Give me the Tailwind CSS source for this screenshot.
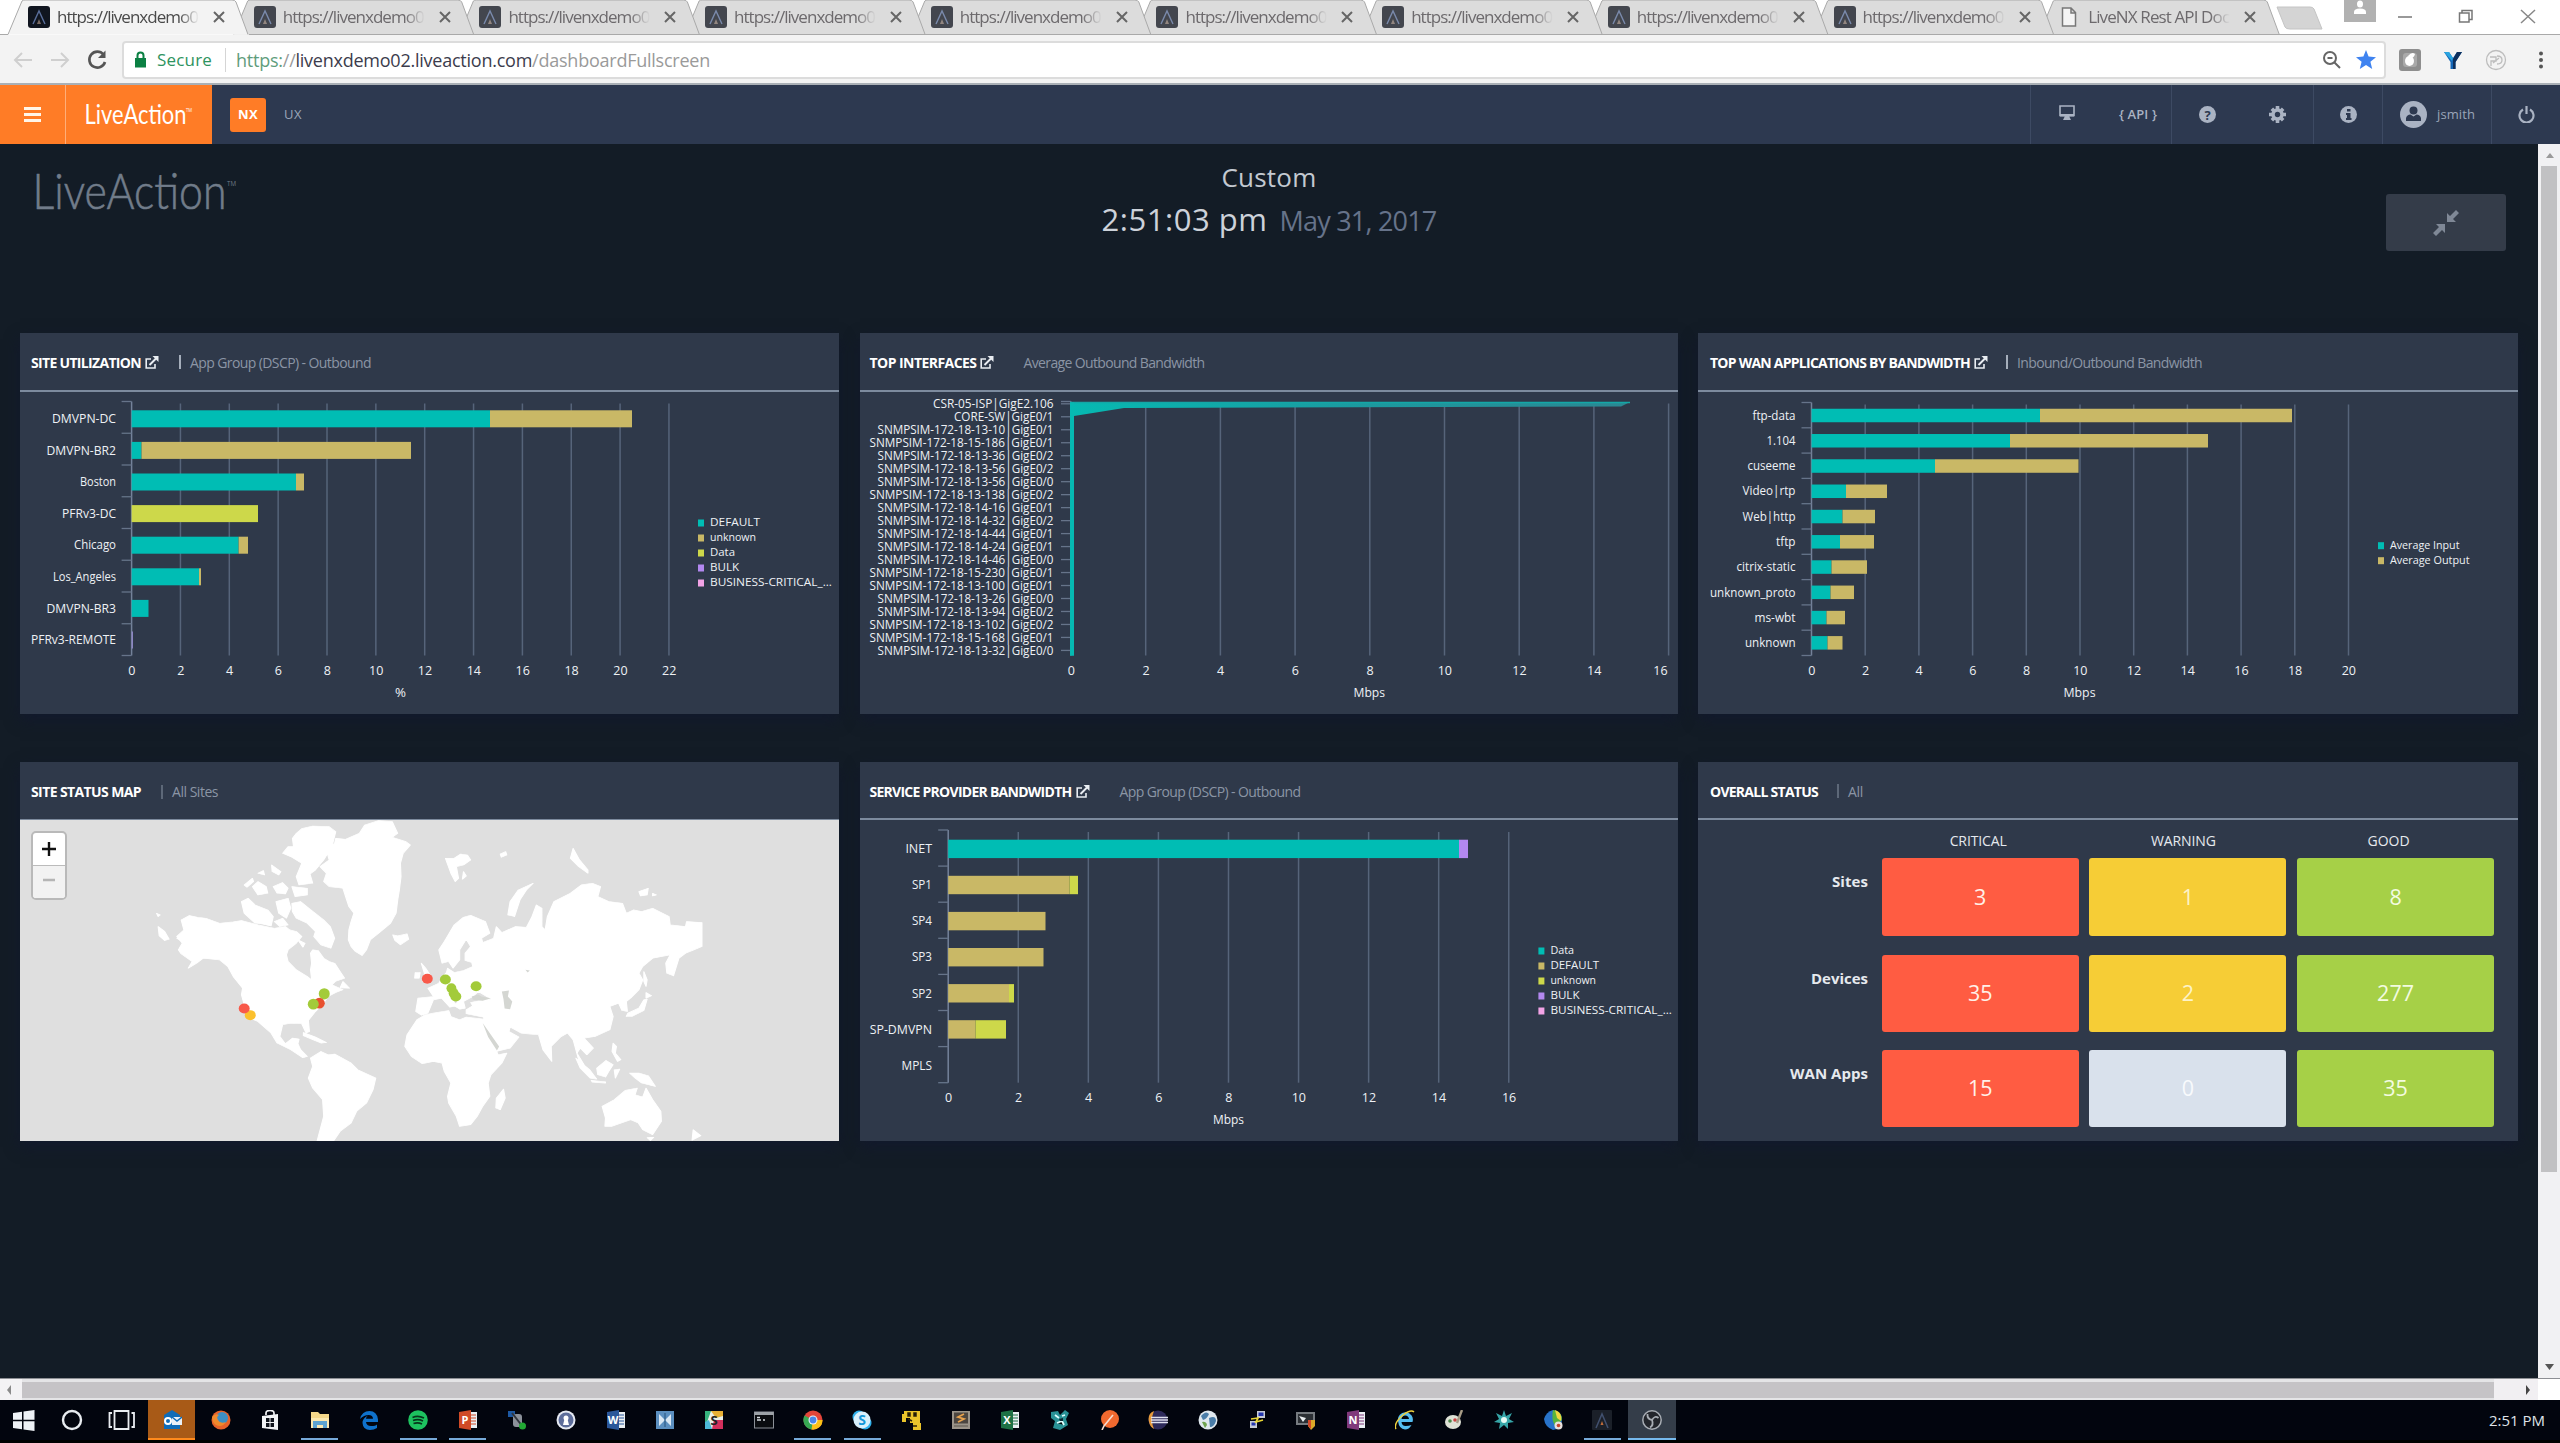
<!DOCTYPE html>
<html lang="en">
<head>
<meta charset="utf-8">
<title>LiveNX Dashboard</title>
<script src="https://cdn.jsdelivr.net/npm/@tailwindcss/browser@4"></script>
</head>
<body class="w-[2560px] h-[1443px] overflow-hidden bg-[#131c26] font-['Open_Sans','Noto_Sans',sans-serif]">
<div class="flex flex-col w-full h-full">

  <!-- tab strip -->
  <div class="relative h-[35px] shrink-0 bg-white flex items-stretch">
    <svg id="tabshapes" class="absolute inset-0" width="2560" height="35"></svg>
    <div id="tabs" class="relative flex pl-[13px] w-[2276px]"></div>
    <div class="relative flex-1 flex">
      <div class="ml-[68px] w-[32px] h-[22px] bg-[#b1b1b1] flex justify-center">
        <svg width="14" height="14" viewBox="0 0 14 14" fill="#fff"><ellipse cx="7" cy="4" rx="3" ry="3.5"/><path d="M1 14V12Q1 8.500 7 8.500T13 12V14Z"/></svg>
      </div>
      <svg class="ml-[22px]" width="14" height="35"><path d="M0 17H14" stroke="#777" stroke-width="1.500"/></svg>
      <svg class="ml-[46px]" width="16" height="35" fill="none" stroke="#777" stroke-width="1.500"><path d="M1.500 13H11V22H1.500ZM4 13V10.500H14V19.500H11"/></svg>
      <svg class="ml-[46px]" width="16" height="35" stroke="#888" stroke-width="1.500"><path d="M1 10L15 23M15 10L1 23"/></svg>
    </div>
  </div>

  <!-- address bar -->
  <div class="h-[50px] shrink-0 bg-[#f3f3f3] border-b-2 border-[#aab0b6] flex items-center pt-px">
    <svg class="ml-[13px]" width="20" height="16" fill="none" stroke="#cfcfcf" stroke-width="2"><path d="M19 8H2M9 1L2 8L9 15"/></svg>
    <svg class="ml-[17px]" width="20" height="16" fill="none" stroke="#cfcfcf" stroke-width="2"><path d="M1 8H18M11 1L18 8L11 15"/></svg>
    <svg class="ml-[17px]" width="21" height="20" fill="none" stroke="#555" stroke-width="2.600"><path d="M16.500 4.500A8 8 0 1 0 18 12"/><path d="M18.500 0.500V8H11Z" fill="#555" stroke="none"/></svg>
    <div class="ml-[14px] w-[2264px] h-[38px] bg-white border-2 border-[#dcdcdc] rounded-[4px] flex items-center text-[18px]">
      <svg class="ml-[10px]" width="13" height="17" fill="#0b8043"><path d="M1 7H12V16.500H1Z"/><path d="M3.500 8V4.500A3 3 0 0 1 9.500 4.500V8" fill="none" stroke="#0b8043" stroke-width="2"/></svg>
      <span class="ml-[10px] text-[#2e9360] text-[17px] leading-none" data-w="55">Secure</span>
      <span class="ml-[13px] w-px h-[24px] bg-[#d5d5d5]"></span>
      <span class="ml-[10px] leading-none whitespace-pre text-[#9a9a9a]" data-w="474"><span class="text-[#5f9d7c]">https:</span>//<span class="text-[#3c3c4c]">livenxdemo02.liveaction.com</span>/dashboardFullscreen</span>
      <span class="flex-1"></span>
      <svg class="mr-[14px]" width="20" height="20" fill="none" stroke="#666" stroke-width="2"><circle cx="8" cy="8" r="6"/><path d="M12.500 12.500L18 18M5.500 8H10.500"/></svg>
      <svg class="mr-[8px]" width="20" height="19" viewBox="0 0 20 19" fill="#3f83f0"><path d="M10 0L12.600 6.600L20 7.200L14.400 11.700L16.200 19L10 15L3.800 19L5.600 11.700L0 7.200L7.400 6.600Z"/></svg>
    </div>
    <svg class="ml-[13px]" width="22" height="22"><rect width="22" height="22" rx="3" fill="#8e8e8e"/><rect x="4" y="4" width="14" height="14" rx="3" fill="#a9a9a9"/><ellipse cx="10.500" cy="12" rx="4.500" ry="5" fill="#fff"/><path d="M9 7Q13 2 16 5Q15 9 12 9Z" fill="#fff"/></svg>
    <svg class="ml-[23px]" width="18" height="18"><path d="M0 1H5L9 7L13 1H18L11.500 11V18H6.500V11Z" fill="#1467b8"/><path d="M13 1H18L11.500 11V18H9V8Z" fill="#0d2f5c"/><path d="M0 1H5L9 7L8 10Z" fill="#29a5e0"/></svg>
    <svg class="ml-[23px]" width="22" height="22" fill="none" stroke="#bdbdbd" stroke-width="1.300"><circle cx="11" cy="11" r="9.500"/><path d="M5 8H11V12H6V17M12 7Q17 7 17 11T12 15M8 14L14 9"/></svg>
    <svg class="ml-[31px]" width="6" height="18" fill="#555"><circle cx="3" cy="2.500" r="2"/><circle cx="3" cy="9" r="2"/><circle cx="3" cy="15.500" r="2"/></svg>
  </div>

  <!-- application bar -->
  <header class="h-[59px] shrink-0 bg-[#2d3950] flex items-stretch text-[#aab3c3]">
    <div class="w-[65px] bg-[#ff7c26] flex items-center justify-center"><svg width="17" height="15" fill="#fff5e8"><path d="M0 0H17V3H0ZM0 6H17V9H0ZM0 12H17V15H0Z"/></svg></div>
    <div class="w-[147px] bg-[#ff7c26] border-l border-[#ffae78]">
      <svg width="146" height="59"><text x="18.500" y="39" textLength="102" lengthAdjust="spacingAndGlyphs" fill="#fff" class="text-[26px] font-[Lato] font-normal">LiveAction</text><text x="120" y="27" textLength="6" lengthAdjust="spacingAndGlyphs" fill="#fff" class="text-[5px]">TM</text></svg>
    </div>
    <div class="flex items-center">
      <div class="ml-[18px] w-[36px] h-[34px] rounded-[3px] bg-[#ff7c26] flex items-center justify-center text-white font-bold text-[13px]"><span data-w="20">NX</span></div>
      <span class="ml-[18px] text-[13px] text-[#9aa5b8]" data-w="18">UX</span>
    </div>
    <div class="flex-1"></div>
    <div class="w-[141px] border-l border-[#3d4a63] flex items-center">
      <svg class="ml-[28px] mb-1" width="16" height="16"><path d="M1 1H15V10.500H1Z" fill="none" stroke="#aab3c3" stroke-width="1.600"/><path d="M1 9H15V11.500H1ZM6 11H10L12 15H4Z" fill="#aab3c3"/></svg>
      <span class="ml-[44px] text-[13px] font-semibold" data-w="38">{ API }</span>
    </div>
    <div class="w-[142px] border-l border-[#3d4a63] flex items-center">
      <svg class="ml-[27px]" width="17" height="17"><circle cx="8.500" cy="8.500" r="8.500" fill="#aab3c3"/><text x="8.500" y="13.500" text-anchor="middle" fill="#2d3950" class="text-[13px] font-bold">?</text></svg>
      <svg class="ml-[53px]" width="17" height="17" viewBox="-8.500 -8.500 17 17"><g fill="#aab3c3"><path d="M-1.800 -8.500H1.800V8.500H-1.800ZM-8.500 -1.800V1.800H8.500V-1.800Z"/><path d="M-1.800 -8H1.800V8H-1.800ZM-8 -1.800V1.800H8V-1.800Z" transform="rotate(45)"/><circle r="6.200"/></g><circle r="2.700" fill="#2d3950"/></svg>
    </div>
    <div class="w-[69px] border-l border-[#3d4a63] flex items-center justify-center">
      <svg width="17" height="17"><circle cx="8.500" cy="8.500" r="8.500" fill="#aab3c3"/><path d="M7 3H10.500V5.500H7ZM6 7H10.500V12H11.500V14H6V12H7V9H6Z" fill="#2d3950"/></svg>
    </div>
    <div class="w-[109px] border-l border-[#3d4a63] flex items-center">
      <svg class="ml-[17px]" width="27" height="27"><circle cx="13.500" cy="13.500" r="13.500" fill="#aab3c3"/><circle cx="13.500" cy="9.500" r="4" fill="#2d3950"/><path d="M6 20V17Q7 13.500 10.500 13.500L13.500 15.500L16.500 13.500Q20 13.500 21 17V20Z" fill="#2d3950"/></svg>
      <span class="ml-[10px] text-[13px] text-[#9aa5b8]" data-w="38">jsmith</span>
    </div>
    <div class="w-[69px] border-l border-[#3d4a63] flex items-center justify-center">
      <svg width="17" height="17" fill="none" stroke="#aab3c3" stroke-width="2.200"><path d="M5 3.500A7 7 0 1 0 12 3.500M8.500 0V8"/></svg>
    </div>
  </header>

  <!-- page -->
  <div class="flex flex-1 min-h-0">
    <main class="w-[2538px] shrink-0">
      <div class="h-[189px] flex items-start justify-between">
        <svg class="w-[300px]" width="300" height="100"><text x="32.500" y="64.500" textLength="194" lengthAdjust="spacingAndGlyphs" fill="#717c8a" stroke="#717c8a" stroke-width=".6" class="text-[49px] font-[Lato] font-light">LiveAction</text><text x="227" y="42" textLength="9" lengthAdjust="spacingAndGlyphs" fill="#717c8a" class="text-[8px]">TM</text></svg>
        <div class="flex flex-col items-center">
          <span class="mt-[15px] text-[26px] leading-[36px] text-[#c3c9d1]" data-w="95">Custom</span>
          <div class="mt-[2px] flex items-baseline leading-[44px]">
            <span class="text-[31px] text-[#cdd2da]" data-w="166">2:51:03 pm</span>
            <span class="ml-[12px] text-[27px] text-[#66738a]" data-w="157">May 31, 2017</span>
          </div>
        </div>
        <div class="w-[300px] flex justify-end pr-[32px] pt-[50px]">
          <button class="w-[120px] h-[57px] rounded-[3px] bg-[#343c49] flex items-center justify-center">
            <svg width="26" height="26" fill="#7f8896"><path d="M14 3V12H23L20 9L26 3L23 0L17 6Z"/><path d="M12 23V14H3L6 17L0 23L3 26L9 20Z"/></svg>
          </button>
        </div>
      </div>
      <div class="grid grid-cols-[819px_818px_820px] grid-rows-[381px_379px] gap-x-[20.500px] gap-y-[48px] pl-[20px]" id="cards">

        <section class="bg-[#2f394a] shadow-[0_6px_14px_rgba(18,24,45,0.9)] flex flex-col">
          <div class="h-[58.500px] shrink-0 border-b-2 border-[#7d8b9e] flex items-center pl-[11px] pt-[2px] text-[14px] text-[#8b95a5]">
            <b class="text-white" data-w="110">SITE UTILIZATION</b>
            <svg class="ml-[4px]" width="14" height="13"><use href="#ext"/></svg>
            <i class="ml-[20px] w-[2px] h-[14px] bg-[#a5aebb]"></i><span class="ml-[9px]" data-w="181">App Group (DSCP) - Outbound</span>
          </div>
          <svg class="flex-1" viewBox="20 391.500 819 322.500" id="c1"></svg>
        </section>

        <section class="bg-[#2f394a] shadow-[0_6px_14px_rgba(18,24,45,0.9)] flex flex-col">
          <div class="h-[58.500px] shrink-0 border-b-2 border-[#7d8b9e] flex items-center pl-[10px] pt-[2px] text-[14px] text-[#8b95a5]">
            <b class="text-white" data-w="107">TOP INTERFACES</b>
            <svg class="ml-[3px]" width="14" height="13"><use href="#ext"/></svg>
            <span class="ml-[30px]" data-w="181">Average Outbound Bandwidth</span>
          </div>
          <svg class="flex-1" viewBox="860 391.500 818 322.500" id="c2"></svg>
        </section>

        <section class="bg-[#2f394a] shadow-[0_6px_14px_rgba(18,24,45,0.9)] flex flex-col">
          <div class="h-[58.500px] shrink-0 border-b-2 border-[#7d8b9e] flex items-center pl-[12px] pt-[2px] text-[14px] text-[#8b95a5]">
            <b class="text-white" data-w="260">TOP WAN APPLICATIONS BY BANDWIDTH</b>
            <svg class="ml-[4px]" width="14" height="13"><use href="#ext"/></svg>
            <i class="ml-[18px] w-[2px] h-[14px] bg-[#a5aebb]"></i><span class="ml-[9px]" data-w="185">Inbound/Outbound Bandwidth</span>
          </div>
          <svg class="flex-1" viewBox="1698 391.500 820 322.500" id="c3"></svg>
        </section>

        <section class="bg-[#2f394a] shadow-[0_6px_14px_rgba(18,24,45,0.9)] flex flex-col">
          <div class="h-[58px] shrink-0 border-b border-[#7d8b9e] flex items-center pl-[11px] pt-[2px] text-[14px] text-[#8b95a5]">
            <b class="text-white" data-w="110">SITE STATUS MAP</b>
            <i class="ml-[20px] w-[2px] h-[14px] bg-[#5d6878]"></i><span class="ml-[9px]" data-w="46">All Sites</span>
          </div>
          <div class="relative flex-1 min-h-0 bg-[#dfdfdf]">
            <svg class="absolute inset-0 w-full h-full" viewBox="36 210 1494 964" preserveAspectRatio="none">
              <g fill="#fff" stroke="#fff" stroke-width="2" stroke-linejoin="round">
                <path d="M330 510L345 497 360 502 375 505 400 520 425 516 440 512 470 525 500 535 520 530 528 540 540 545 550 560 540 580 525 600 522 615 525 635 540 660 560 680 568 690 566 660 568 640 566 610 570 600 580 602 590 625 600 635 610 640 620 665 628 685 612 694 605 705 615 712 625 720 612 728 598 740 590 760 575 785 562 812 564 845 558 850 550 822 530 820 515 825 510 860 520 882 533 865 545 868 543 882 548 900 560 920 552 924 530 900 505 880 494 850 470 815 460 808 445 765 440 735 442 715 425 680 415 650 400 630 370 625 358 640 343 655 350 635 330 612 325 600 332 580 322 560 335 540Z"/>
                <path d="M566 925L585 905 598 915 610 913 640 940 652 960 685 985 680 1020 668 1060 650 1085 640 1120 620 1145 608 1174 578 1174 590 1100 588 1050 570 1015 562 985 570 950Z"/>
                <path d="M655 250L665 225 690 212 715 215 725 250 715 262 740 275 748 285 735 310 730 340 731 380 728 420 725 450 722 490 712 520 690 550 675 570 668 600 660 617 648 605 640 590 635 570 636 540 640 515 645 490 636 470 630 440 625 415 600 410 590 395 595 370 583 350 600 330 595 300 610 280 612 265 630 268Z"/>
                <path d="M540 250L550 236 570 228 600 230 612 245 605 290 590 330 575 360 565 372 570 400 545 405 540 380 550 340 530 320 515 310 525 290 535 290 533 265Z"/>
                <path d="M440 455L452 445 465 465 488 480 498 500 494 528 478 522 465 520 445 490ZM460 410L470 395 485 410 488 430 470 435ZM445 405L460 385 462 395 450 412ZM495 345L512 365 508 375 496 365ZM498 410L515 398 525 415 520 432 505 430ZM503 455L525 445 530 475 522 505 508 490ZM532 410L560 415 560 435 538 440ZM532 460L548 455 565 478 590 510 602 530 610 565 603 595 585 585 572 560 575 545 560 520 540 505 533 485ZM543 570L556 580 552 592ZM470 370L480 362 482 375ZM500 515L515 505 525 525 510 530ZM288 530L300 545 308 568 300 572 290 558ZM285 490L292 495 288 500ZM322 565L330 560 332 575Z"/>
                <path d="M716 555L725 558 742 552 745 568 730 585 720 572ZM812 325L828 325 840 312 852 315 858 330 845 345 832 350 836 385 830 395 822 370ZM845 365L850 378 843 388ZM912 312L922 305 924 315 914 322ZM972 400L960 420 948 450 938 500 926 495 930 455 945 420ZM1045 295L1056 328 1072 360 1072 370 1055 350 1040 325ZM1165 425L1182 415 1180 435 1168 438ZM1190 430L1197 435 1190 438Z"/>
                <path d="M800 600L810 575 828 525 845 502 858 496 885 515 893 550 878 565 880 578 900 565 905 530 915 548 940 530 960 532 970 500 978 465 988 475 988 530 994 540 998 500 1010 455 1040 430 1060 405 1080 400 1095 410 1090 440 1110 455 1135 460 1142 490 1155 480 1170 485 1190 475 1220 500 1222 525 1250 530 1252 515 1280 518 1280 590 1265 600 1250 610 1238 625 1228 678 1216 670 1214 640 1222 615 1190 625 1172 650 1165 670 1172 690 1165 720 1150 745 1142 755 1144 785 1134 782 1128 760 1112 770 1118 800 1112 840 1085 860 1065 865 1082 895 1070 915 1058 895 1052 910 1065 945 1055 930 1045 870 1035 850 1022 862 1005 890 1006 935 990 900 982 855 968 853 950 850 930 832 928 845 946 862 930 895 905 905 893 870 882 830 882 802 850 792 850 780 862 768 858 758 875 752 895 748 885 738 872 725 862 740 845 755 848 775 838 778 828 768 835 755 818 735 828 758 832 768 820 772 805 745 790 750 780 790 768 796 758 785 762 745 790 740 780 715 800 700 808 680 814 668 816 655 828 668 845 662 862 650 860 638 848 632 848 610 858 590 850 568 838 600 838 630 826 655 818 635 806 640Z"/>
                <path d="M760 810L775 795 790 790 818 782 822 800 838 810 850 802 882 808 886 840 900 880 908 915 924 910 915 940 895 975 890 1000 893 1040 880 1070 870 1100 858 1125 838 1130 832 1100 818 1060 816 1040 822 1000 810 965 806 940 790 935 770 942 750 920 738 890 742 855Z"/>
                <path d="M918 1018L921 1045 912 1080 904 1075 905 1045ZM768 640L776 655 784 675 788 690 770 694 774 672ZM757 668L766 668 764 685 756 685ZM1174 665L1180 690 1178 710 1174 695ZM1178 728L1188 738 1178 745ZM1180 748L1174 782 1152 800 1142 800 1145 790 1165 775 1174 750ZM1050 925L1075 960 1088 988 1076 985 1058 955ZM1078 992L1104 996 1104 1000 1080 997ZM1088 955L1105 932 1118 945 1110 965 1104 982 1090 975ZM1118 880L1124 890 1122 910 1132 930 1126 935 1116 905ZM1148 970L1165 970 1182 978 1195 1010 1170 1000 1158 985ZM1120 960L1130 958 1122 985ZM1098 1070L1120 1050 1140 1022 1162 1015 1158 1035 1172 1042 1178 1015 1190 1050 1205 1085 1206 1115 1190 1155 1172 1140 1164 1120 1150 1110 1115 1130 1103 1130 1104 1105ZM1180 1164L1192 1163 1186 1173ZM1264 1140L1278 1158 1262 1172ZM625 695L637 715 620 714ZM553 848L575 862 595 878 585 880 568 868 553 858Z"/>
              </g>
              <g fill="#d4d6d2"><path d="M860 740L872 734 878 740 895 745 880 753 862 750ZM915 725L928 722 926 740 934 755 930 778 920 776 918 748ZM880 820L910 890 906 902 890 862ZM958 660L966 662 962 668Z"/></g>
              <g fill="#a3cb3a"><ellipse cx="591" cy="732" rx="10" ry="17"/></g>
              <ellipse cx="582" cy="760" rx="10" ry="16" fill="#e8502f"/>
              <g fill="#a3cb3a"><ellipse cx="571" cy="763" rx="10" ry="16"/><ellipse cx="812" cy="689" rx="10" ry="15"/><ellipse cx="823" cy="715" rx="9" ry="15"/><ellipse cx="827" cy="730" rx="9" ry="15"/><ellipse cx="831" cy="740" rx="10" ry="15"/><ellipse cx="868" cy="709" rx="10" ry="15"/></g>
              <ellipse cx="456" cy="796" rx="10" ry="15" fill="#fbc02d"/>
              <g fill="#f8594a"><ellipse cx="445" cy="776" rx="10" ry="15"/><ellipse cx="779" cy="687" rx="10" ry="15"/></g>
            </svg>
            <div class="absolute left-[11px] top-[11px] w-[36px] h-[69px] rounded-[5px] border-2 border-[#b9b9b9] bg-white flex flex-col overflow-hidden">
              <div class="flex-1 border-b border-[#bbb] flex items-center justify-center"><svg width="14" height="14" stroke="#111" stroke-width="2.400"><path d="M7 0V14M0 7H14"/></svg></div>
              <div class="flex-1 bg-[#f2f2f2] flex items-center justify-center"><svg width="12" height="14" stroke="#b5b5b5" stroke-width="2.400"><path d="M0 5H12"/></svg></div>
            </div>
          </div>
        </section>

        <section class="bg-[#2f394a] shadow-[0_6px_14px_rgba(18,24,45,0.9)] flex flex-col">
          <div class="h-[58px] shrink-0 border-b-2 border-[#7d8b9e] flex items-center pl-[10px] pt-[2px] text-[14px] text-[#8b95a5]">
            <b class="text-white" data-w="202">SERVICE PROVIDER BANDWIDTH</b>
            <svg class="ml-[4px]" width="14" height="13"><use href="#ext"/></svg>
            <span class="ml-[30px]" data-w="181">App Group (DSCP) - Outbound</span>
          </div>
          <svg class="flex-1" viewBox="860 820 818 321" id="c5"></svg>
        </section>

        <section class="bg-[#2f394a] shadow-[0_6px_14px_rgba(18,24,45,0.9)] flex flex-col">
          <div class="h-[58px] shrink-0 border-b-2 border-[#7d8b9e] flex items-center pl-[12px] pt-[2px] text-[14px] text-[#8b95a5]">
            <b class="text-white" data-w="108">OVERALL STATUS</b>
            <i class="ml-[19px] w-[2px] h-[14px] bg-[#5d6878]"></i><span class="ml-[9px]" data-w="15">All</span>
          </div>
          <div id="status" class="grid grid-cols-[173px_197px_197px_197px] grid-rows-[20px_78px_77px_77px] gap-x-[10.700px] gap-y-[18.500px] pt-[11px] [&>*:nth-child(n+5)]:-mt-[11.500px] [&>*:nth-child(n+5)]:mb-[11.500px] text-[#e6e9ee]">
            <span></span>
            <span class="text-center text-[14px] leading-[20px] pr-[4px]"><span data-w="57">CRITICAL</span></span>
            <span class="text-center text-[14px] leading-[20px] pr-[9px]"><span data-w="65">WARNING</span></span>
            <span class="text-center text-[14px] leading-[20px] pr-[14px]"><span data-w="42">GOOD</span></span>
            <b class="text-right text-[15px] leading-[20px] pt-[13px] pr-[3px]"><span data-w="36">Sites</span></b>
            <div class="bg-[#ff5c42] rounded-[3px] flex items-center justify-center text-[21.500px] text-[#fff0e8]">3</div>
            <div class="bg-[#f6cd36] rounded-[3px] flex items-center justify-center text-[21.500px] text-[#fdf3c8]">1</div>
            <div class="bg-[#a6d047] rounded-[3px] flex items-center justify-center text-[21.500px] text-[#f3fbe0]">8</div>
            <b class="text-right text-[15px] leading-[20px] pt-[13px] pr-[3px]"><span data-w="57">Devices</span></b>
            <div class="bg-[#ff5c42] rounded-[3px] flex items-center justify-center text-[21.500px] text-[#fff0e8]">35</div>
            <div class="bg-[#f6cd36] rounded-[3px] flex items-center justify-center text-[21.500px] text-[#fdf3c8]">2</div>
            <div class="bg-[#a6d047] rounded-[3px] flex items-center justify-center text-[21.500px] text-[#f3fbe0]">277</div>
            <b class="text-right text-[15px] leading-[20px] pt-[13px] pr-[3px]"><span data-w="78">WAN Apps</span></b>
            <div class="bg-[#ff5c42] rounded-[3px] flex items-center justify-center text-[21.500px] text-[#fff0e8]">15</div>
            <div class="bg-[#d9e1ec] rounded-[3px] flex items-center justify-center text-[21.500px] text-[#f8fafc]">0</div>
            <div class="bg-[#a6d047] rounded-[3px] flex items-center justify-center text-[21.500px] text-[#f3fbe0]">35</div>
          </div>
        </section>
      </div>
    </main>
    <!-- vertical scrollbar -->
    <div class="w-[22px] bg-[#f1f1f3] flex flex-col items-center">
      <svg width="22" height="22"><path d="M8 14L12 9L16 14Z" fill="#9a9a9a"/></svg>
      <div class="w-[16px] h-[1006px] bg-[#c1c1c3]"></div>
      <div class="flex-1"></div>
      <svg width="22" height="22"><path d="M7 8H16L11.500 14Z" fill="#555"/></svg>
    </div>
  </div>

  <!-- horizontal scrollbar -->
  <div class="h-[22px] shrink-0 bg-[#e4e4e6] border-t border-[#8d8f94] flex items-center">
    <svg class="bg-[#f3f2f4]" width="22" height="21"><path d="M11 6L7 11L11 16Z" fill="#8a8a8a"/></svg>
    <div class="w-[2472px] h-[16px] bg-[#c5c3c6]"></div>
    <svg class="bg-[#f1eff2]" width="44" height="21"><path d="M32 6L36 11L32 16Z" fill="#444"/></svg>
    <div class="flex-1 h-full bg-white"></div>
  </div>

  <!-- taskbar -->
  <div class="h-[43px] shrink-0 bg-[#02050e] flex items-stretch border-b-[3px] border-black">
    <div class="w-[48px] flex items-center justify-center"><svg width="22" height="21" fill="#eef2f6"><path d="M0 3L9 1.700V9.800H0ZM10.500 1.500L21.500 0V9.800H10.500ZM0 11.200H9V19.300L0 18ZM10.500 11.200H21.500V21L10.500 19.500Z"/></svg></div>
    <div class="w-[48px] flex items-center justify-center"><svg width="22" height="22"><circle cx="11" cy="11" r="9" fill="none" stroke="#e8ecf0" stroke-width="2.400"/></svg></div>
    <div class="w-[51px] flex items-center justify-center"><svg width="28" height="20" fill="none" stroke="#e8ecf0" stroke-width="1.800"><path d="M6.500 1H20.500V19H6.500ZM4 3H1.500V17H4M23.500 3H26V17H23.500"/></svg></div>
    <div id="task" class="flex"></div>
    <div class="flex-1"></div>
    <div class="w-[71px] flex items-center text-[15px] text-[#dfe3e8]"><span data-w="56">2:51 PM</span></div>
  </div>
</div>

<svg width="0" height="0" class="absolute"><defs><g id="ext"><path d="M6 3H1.200V12H10V8" fill="none" stroke="#e9edf2" stroke-width="1.600"/><path d="M4.500 9L11 2.500" stroke="#e9edf2" stroke-width="2"/><path d="M7.500 0H13.500V6Z" fill="#e9edf2"/></g></defs></svg>

<script>
/* ---- browser tabs ---- */
const P = 225.7;
let shapes = '', tabs = '';
for (let i = 9; i >= 0; i--) {
  const x = 8 + i * P;
  shapes += `<path d="M${x} 34.500L${x + 14} 1Q${x + 15} 0 ${x + 17} 0H${x + 224}Q${x + 227} 0 ${x + 228} 2L${x + 240} 34.500" fill="${i ? '#dcdcdc' : '#f3f3f3'}" stroke="#a9a9a9"/>`;
}
shapes += '<path d="M249 34.500H2560M0 34.500H8" stroke="#a9a9a9"/><path d="M2277 7H2310Q2313 7 2314 9L2322 29H2290Q2286 29 2285 27Z" fill="#d4d4d4" stroke="#c4c4c4"/>';
document.getElementById('tabshapes').innerHTML = shapes;
for (let i = 0; i < 10; i++) {
  const icon = i < 9
    ? `<svg class="ml-[15px] shrink-0" width="22" height="22" opacity="${i ? .75 : 1}"><rect width="22" height="22" rx="3" fill="#10151f"/><path d="M5 18L11 5L17 18" fill="none" stroke="#5a6f9c" stroke-width="1.400"/><path d="M9 18L11 13L13 18Z" fill="#7a6a62"/></svg>`
    : '<svg class="ml-[17px] mr-[4px] shrink-0" width="16" height="20" fill="#f4f4f4" stroke="#777" stroke-width="1.500"><path d="M1.500 1H10L14.500 5.500V19H1.500ZM10 1V6H14.500"/></svg>';
  tabs += `<div class="w-[225.700px] h-[34px] shrink-0 flex items-center">${icon}
    <span class="ml-[7px] w-[142px] overflow-hidden whitespace-nowrap text-[17px] leading-[30px] [mask-image:linear-gradient(90deg,#000_86%,transparent_100%)] ${i ? 'text-[#6d6a6d]' : 'text-[#4a4a4a]'}"><span data-w="${i < 9 ? 141 : 141}">${i < 9 ? 'https://livenxdemo0' : 'LiveNX Rest API Doc'}</span></span>
    <svg class="ml-[14px] shrink-0" width="12" height="12" stroke="#666" stroke-width="2"><path d="M1 1L11 11M11 1L1 11"/></svg></div>`;
}
document.getElementById('tabs').innerHTML = tabs;

/* ---- charts ---- */
const TEAL = '#00bdb4', TAN = '#c9b866', LIME = '#cdd84a', PURPLE = '#b388f0', PINK = '#f2a3e6';
const txt = (s, x0, x1, y, size = 13) => `<text x="${x0}" y="${y}" textLength="${x1 - x0}" lengthAdjust="spacingAndGlyphs" font-size="${size}" font-weight="500" fill="#eef1f5">${s}</text>`;
const rect = (x0, x1, y, h, c) => `<rect x="${x0}" y="${y}" width="${x1 - x0}" height="${h}" fill="${c}"/>`;
const vline = (x, a, b, c = '#56647a') => `<path d="M${x} ${a}V${b}" stroke="${c}" stroke-width="1.500"/>`;
function axis(o) {
  let s = '';
  for (let i = 0; i <= o.n; i++) {
    const x = o.x + o.step * i;
    s += vline(x, i ? o.top + 2 : o.top, o.bottom, i ? undefined : '#74829a');
    s += `<text x="${i === o.n && o.lastX ? o.lastX : x + .3}" y="${o.bottom + 19.5}" text-anchor="middle" font-size="12.500" font-weight="500" fill="#eef1f5">${i * 2}</text>`;
  }
  for (let i = 0; i <= o.rows; i++) s += `<path d="M${o.x - 10} ${o.top + (o.bottom - o.top) / o.rows * i}H${o.x}" stroke="#66748a" stroke-width="1.300"/>`;
  return s;
}
function bars(o) {
  return o.data.map((r, i) => {
    const cy = o.cy + o.pitch * i;
    let s = txt(r[0], r[1], o.end, cy + 4.2), x = o.x;
    for (let k = 2; k < r.length; k += 2) { s += rect(x, r[k], cy - o.h / 2, o.h, r[k + 1]); x = r[k]; }
    return s;
  }).join('');
}
const legend = (x, y, items) => items.map((t, i) => rect(x, x + 6, y + 15 * i - 3, 7, t[2]) + txt(t[0], x + 12, t[1], y + 15 * i + 3.3, 11.5)).join('');
const put = (id, s) => { document.getElementById(id).innerHTML = s; };

put('c1', axis({ x: 131.6, step: 48.85, n: 11, top: 401, bottom: 655, rows: 8 })
  + bars({ x: 131.6, end: 116, cy: 418.3, pitch: 31.6, h: 17, data: [
    ['DMVPN-DC', 52, 490, TEAL, 632, TAN], ['DMVPN-BR2', 46.5, 141.5, TEAL, 411, TAN], ['Boston', 80, 296, TEAL, 304, TAN],
    ['PFRv3-DC', 62, 258, LIME], ['Chicago', 74, 238.6, TEAL, 248, TAN], ['Los_Angeles', 53, 199, TEAL, 201, TAN],
    ['DMVPN-BR3', 46.5, 148.5, TEAL], ['PFRv3-REMOTE', 31, 133, '#8d86c4']] })
  + txt('%', 395, 406, 696) + legend(698, 522, [['DEFAULT', 760, TEAL], ['unknown', 756, TAN], ['Data', 735, LIME], ['BULK', 739, PURPLE], ['BUSINESS-CRITICAL_...', 832, PINK]]));

const ifs = ['CSR-05-ISP|GigE2.106', 'CORE-SW|GigE0/1', '13-10|GigE0/1', '15-186|GigE0/1', '13-36|GigE0/2', '13-56|GigE0/2', '13-56|GigE0/0', '13-138|GigE0/2', '14-16|GigE0/1', '14-32|GigE0/2', '14-44|GigE0/1', '14-24|GigE0/1', '14-46|GigE0/0', '15-230|GigE0/1', '13-100|GigE0/1', '13-26|GigE0/0', '13-94|GigE0/2', '13-102|GigE0/2', '15-168|GigE0/1', '13-32|GigE0/0'];
put('c2', axis({ x: 1071, step: 74.7, n: 8, top: 401, bottom: 655, rows: 0.5, lastX: 1660.5 })
  + ifs.map((t, i) => {
    const y = 403.3 + 12.98 * i;
    const x0 = i === 0 ? 933 : i === 1 ? 954 : /^\d\d-\d\d\d/.test(t) ? 869.5 : 877.5;
    return txt((i > 1 ? 'SNMPSIM-172-18-' : '') + t, x0, 1053.5, y + 4.2, 12.5) + `<path d="M1061 ${y}H1071" stroke="#66748a" stroke-width="1.300"/>`;
  }).join('')
  + '<defs><linearGradient id="ag"><stop offset="0" stop-color="#06b9b2"/><stop offset=".5" stop-color="#1b9ba0"/><stop offset="1" stop-color="#2b8792"/></linearGradient></defs>'
  + '<path d="M1070 401.500H1630L1621 406L1124 407.500L1096 412L1074 415.500V655H1070Z" fill="url(#ag)"/><path d="M1070 402H1630" stroke="#14a7a6" stroke-width="1.500"/><path d="M1072 402V655" stroke="#06b9b2" stroke-width="4"/>'
  + txt('Mbps', 1353.5, 1385, 696));

put('c3', axis({ x: 1811.5, step: 53.7, n: 10, top: 402, bottom: 655, rows: 10 })
  + bars({ x: 1811.5, end: 1795.5, cy: 415, pitch: 25.26, h: 13.5, data: [
    ['ftp-data', 1752.5, 2040, TEAL, 2292, TAN], ['1.104', 1766.5, 2010, TEAL, 2208, TAN], ['cuseeme', 1747.5, 1935, TEAL, 2078.5, TAN],
    ['Video|rtp', 1742.5, 1846, TEAL, 1887, TAN], ['Web|http', 1742.5, 1842.5, TEAL, 1875, TAN], ['tftp', 1776, 1840, TEAL, 1874, TAN],
    ['citrix-static', 1736.5, 1831.5, TEAL, 1867, TAN], ['unknown_proto', 1710, 1830.5, TEAL, 1854, TAN], ['ms-wbt', 1754.5, 1826.5, TEAL, 1845, TAN], ['unknown', 1745, 1827.5, TEAL, 1842.5, TAN]] })
  + txt('Mbps', 2063.5, 2095.5, 696) + legend(2378, 544.7, [['Average Input', 2459.5, TEAL], ['Average Output', 2469.5, TAN]]));

put('c5', axis({ x: 948.2, step: 70.07, n: 8, top: 830, bottom: 1082.7, rows: 7 })
  + bars({ x: 948.2, end: 932, cy: 848.9, pitch: 36.1, h: 18.4, data: [
    ['INET', 905.4, 1459, TEAL, 1468, PURPLE], ['SP1', 912, 1069.5, TAN, 1078, LIME], ['SP4', 912, 1045.5, TAN], ['SP3', 912, 1043.5, TAN],
    ['SP2', 912, 1009, TAN, 1014, LIME], ['SP-DMVPN', 869.7, 975.5, TAN, 1006, LIME], ['MPLS', 901.5]] })
  + txt('Mbps', 1213, 1244, 1124) + legend(1538.4, 950.5, [['Data', 1574, TEAL], ['DEFAULT', 1599, TAN], ['unknown', 1596, LIME], ['BULK', 1579.5, PURPLE], ['BUSINESS-CRITICAL_...', 1672, PINK]]));

/* ---- taskbar icons, 20x20 each ---- */
const L = (c, t, x = 10, f = '#fff', s = 11) => `<text x="${x}" y="14" text-anchor="middle" font-weight="700" font-size="${s}" fill="${f}">${t}</text>`;
const doc = (c, t) => `<path d="M10 2H19V18H10Z" fill="#e9eef2"/><path d="M12 5H18M12 8H18M12 11H18M12 14H18" stroke="${c}" stroke-width="1.200"/><path d="M1 2L13 0V20L1 18Z" fill="${c}"/>` + L(c, t, 7);
const icons = [
  '<path d="M2 5L10 0L18 5V19H2Z" fill="#0f6cb8"/><path d="M10 7H20V15H10Z" fill="#eaf1f8"/><path d="M10 7L15 11L20 7" fill="none" stroke="#0f6cb8" stroke-width="1.500"/><circle cx="6" cy="11" r="3" fill="none" stroke="#fff" stroke-width="2"/>',
  '<circle cx="10" cy="10" r="9.500" fill="#e8622a"/><circle cx="11" cy="8" r="6" fill="#3c8fc4"/><path d="M1 7Q4 3 8 5Q5 7 7 10Q9 14 15 12Q11 18 5 15Q1 12 1 7Z" fill="#f08a2c"/>',
  '<path d="M2 6L18 4V20L2 18Z" fill="#f2f4f6"/><path d="M6 5V3Q6 .500 10 .500T14 3V5" fill="none" stroke="#f2f4f6" stroke-width="1.700"/><path d="M6 8H9.500V12H6ZM10.500 8H14V12H10.500ZM6 13H9.500V17H6ZM10.500 13H14V17H10.500Z" fill="#10141c"/>',
  '<path d="M1 2H8L10 4H19V17H1Z" fill="#f4d88a"/><path d="M1 8H19V18H1Z" fill="#fbe9b0"/><path d="M3 11H17V18H13V15H7V18H3Z" fill="#5da3cf"/>',
  '<path d="M1 9Q3 1 10.500 1T19 9.500V12H7Q7.500 16 12 16T18 14.500V18Q15 20 11 20Q4 20 3.500 13Q3.500 8 9 5.500Q7 7 7 8.800H14Q14 5 9.500 5T1 9Z" fill="#0f72cc"/>',
  '<circle cx="10" cy="10" r="9.800" fill="#1dc25f"/><path d="M4.500 7.500Q10 5 16 8M5 10.500Q10 8.500 15 11M5.500 13.500Q10 12 14 14" fill="none" stroke="#07351b" stroke-width="1.600"/>',
  doc('#d04a26', 'P'),
  '<path d="M1 1H8V7H1Z" fill="#1d59a3"/><rect x="6" y="4" width="9" height="13" rx="3" fill="#8b919a"/><path d="M5 3L16 17" stroke="#30353d" stroke-width="2"/><circle cx="15.500" cy="16" r="3.500" fill="#22a834"/>',
  '<circle cx="10" cy="10" r="9.500" fill="#e6eaf2"/><circle cx="10" cy="10" r="7.500" fill="#5d6d9a"/><circle cx="10" cy="8" r="2.500" fill="#fff"/><path d="M8.500 9H11.500L13 15H7Z" fill="#fff"/>',
  doc('#2b579a', 'W'),
  '<rect x="1" y="1" width="18" height="18" fill="#5b8fc0"/><path d="M4 4L10 10L4 16ZM16 4L10 10L16 16Z" fill="#d9e7f3"/><path d="M10 3V17" stroke="#27527c"/>',
  '<rect x="1" y="1" width="18" height="18" rx="2" fill="#e9efe9"/><path d="M1 1H7L3 12H1Z" fill="#36b37e"/><path d="M7 1H19V6L12 8Z" fill="#e8b034"/><path d="M10 10H19V19H8Z" fill="#d3305c"/><path d="M1 12L5 10L8 19H1Z" fill="#4cb9d8"/><text x="10" y="15" text-anchor="middle" font-weight="700" font-size="13" fill="#222">S</text>',
  '<rect x=".500" y="2" width="19" height="16" fill="#0a0c10" stroke="#8b9097"/><path d="M.500 2H19.500V5H.500Z" fill="#9da2a8"/><path d="M3 7.500H6M3 10H7M9 10H11" stroke="#d9dde2" stroke-width="1.300"/>',
  '<circle cx="10" cy="10" r="9.500" fill="#e2453a"/><path d="M10 10L1.500 5.500A9.500 9.500 0 0 0 9 19.500Z" fill="#36a852"/><path d="M10 10H19.500A9.500 9.500 0 0 1 8.500 19.500Z" fill="#fbc116"/><circle cx="10" cy="10" r="4.500" fill="#eef3fa"/><circle cx="10" cy="10" r="3.400" fill="#4a86e8"/>',
  '<circle cx="7" cy="7" r="6.500" fill="#2fb0ec"/><circle cx="13" cy="13" r="6.500" fill="#2fb0ec"/><circle cx="10" cy="10" r="8.500" fill="#d8f0fc"/><text x="10" y="15" text-anchor="middle" font-weight="700" font-size="14" fill="#1597d8">S</text>',
  '<path d="M2 1H18V8H2ZM0 4H4V12H0ZM8 8H18V13H8ZM11 13H19V20H11Z" fill="#eac52b"/><path d="M6 3H8V6H6ZM12 3H14V6H12ZM6 9L10 11M11 16H15" stroke="#2a2208" stroke-width="1.500"/>',
  '<rect x="1" y="1" width="18" height="18" fill="#9b9489"/><rect x="3" y="2.500" width="14" height="11" fill="#4c4640"/><path d="M13 4L7 7L13 9L7 12" fill="none" stroke="#e8a24c" stroke-width="1.800"/><path d="M3 16H17" stroke="#5c564d"/>',
  doc('#1e7145', 'X'),
  '<path d="M1 2L8 1L10 5L15 0L19 3L16 9L18 15L10 20L3 18L5 11L1 8Z" fill="#2a9296"/><path d="M5 5L9 8M12 6L15 5M7 13L12 11L14 15" stroke="#dff" stroke-width="1.800"/><path d="M9 9L13 8V11H10Z" fill="#0b2a33"/>',
  '<circle cx="11" cy="9" r="9" fill="#f0692f"/><path d="M14 5L5 16L3 20" stroke="#f5ddd0" stroke-width="1.600" fill="none"/>',
  '<circle cx="10" cy="10" r="9.500" fill="#2d2a5a"/><path d="M6 1Q-1 4 1 12Q2 17 6 19Q2 10 6 1Z" fill="#e89b3c"/><path d="M3 7.500H20M3 10H20M3 12.500H20" stroke="#dfe0ef" stroke-width="1.500"/>',
  '<circle cx="10" cy="10" r="9.500" fill="#dfe8ee"/><path d="M3 6Q8 0 11 4Q9 9 5 10ZM11 8Q18 5 18 11Q16 17 12 17Z" fill="#4a7da8"/><path d="M4 12Q8 11 9 15L7 18Z" fill="#6fa34f"/>',
  '<path d="M10 1H18V8H10ZM3 11H10V18H3Z" fill="#c6cbd6"/><path d="M11.500 2.500H16.500V6H11.500ZM4.500 12.500H8.500V15.500H4.500Z" fill="#2336b0"/><path d="M4 9L11 8L9 12L16 10" stroke="#e8d533" stroke-width="1.700" fill="none"/>',
  '<rect x="0" y="2" width="19" height="13" fill="#767b80"/><rect x="2" y="4" width="15" height="9" fill="#2b2f34"/><path d="M3 6L10 8L7 12Z" fill="#e9edf0"/><path d="M12 10H19V16L15 20L12 16Z" fill="#dba928"/><path d="M12 10H15V19L12 16Z" fill="#d24a2a"/>',
  doc('#80397b', 'N'),
  '<path d="M3 11A7.500 7.500 0 1 1 17.500 12H6.500Q7 16 10.500 16T16.500 15Q14 19.500 10 19.500Q4 19 3 11ZM6.500 9H14Q13.500 5.500 10.200 5.500T6.500 9Z" fill="#54bdf0"/><path d="M1 19Q-2 14 8 5Q16 -1 19 2" fill="none" stroke="#f0d13c" stroke-width="1.500"/>',
  '<ellipse cx="9" cy="12" rx="8" ry="7" fill="#dfe2d6"/><circle cx="6" cy="11" r="1.800" fill="#4d8a4d"/><circle cx="11" cy="10" r="1.800" fill="#c44"/><path d="M18 0L13 13" stroke="#a79c86" stroke-width="2.400"/>',
  '<path d="M10 0L12 6L18 3L15 9L20 12L14 13L14 19L10 15L5 19L6 13L0 12L5 9L2 3L8 6Z" fill="#36a6a8"/><circle cx="10" cy="10" r="3" fill="#e6fbf4"/>',
  '<path d="M10 0Q19 1 19 10T10 20Q2 17 1 9Q3 2 10 0Z" fill="#2873c9"/><path d="M10 0Q19 1 19 10L12 16Q8 9 10 0Z" fill="#58b43c"/><path d="M12 0Q20 3 18 11L14 8Z" fill="#f0d640"/><circle cx="15.500" cy="15.500" r="4" fill="#e8e2de"/><circle cx="15.500" cy="15.500" r="1.800" fill="#c8452e"/>',
  '<rect width="20" height="20" rx="1" fill="#1b2029"/><path d="M4 18L10 4L16 18" fill="none" stroke="#41506e" stroke-width="1.500"/><path d="M8.500 15L10 11L11.500 15Z" fill="#c06c3a"/>',
  '<circle cx="10" cy="10" r="9.200" fill="#23262c" stroke="#a8adb4" stroke-width="1.500"/><path d="M10 10Q5 9 5.500 4M10 10Q13 5 16.500 8M10 10Q12 15 8 17.500" fill="none" stroke="#a8adb4" stroke-width="1.800"/>'
];
const open = [3, 5, 6, 13, 14, 29, 30];
document.getElementById('task').innerHTML = icons.map((s, i) =>
  `<div class="w-[49.330px] flex justify-center items-stretch"><div class="flex flex-col items-center justify-end ${i === 0 ? 'w-[47px] bg-[#a85a17] border-b-2 border-[#ff8a1c]' : i === 30 ? 'w-[48px] bg-[#343d49] border-b-2 border-[#76b9ed]' : open.includes(i) ? 'w-[37px] border-b-2 border-[#76a9d8]' : 'w-[37px] border-b-2 border-transparent'}"><svg class="mb-[8px]" width="20" height="20">${s}</svg></div></div>`).join('');

function fit() {
  document.querySelectorAll('[data-w]').forEach(e => {
    e.style.display = 'inline-block';
    e.style.flexShrink = 0;
    e.style.whiteSpace = 'pre';
    e.style.letterSpacing = '0px';
    const n = e.textContent.length, w = e.getBoundingClientRect().width;
    e.style.letterSpacing = ((+e.dataset.w - w) / n).toFixed(3) + 'px';
  });
}
fit();
addEventListener('load', () => { fit(); requestAnimationFrame(fit); setTimeout(fit, 60); });
document.fonts.ready.then(fit);
</script>
</body>
</html>
